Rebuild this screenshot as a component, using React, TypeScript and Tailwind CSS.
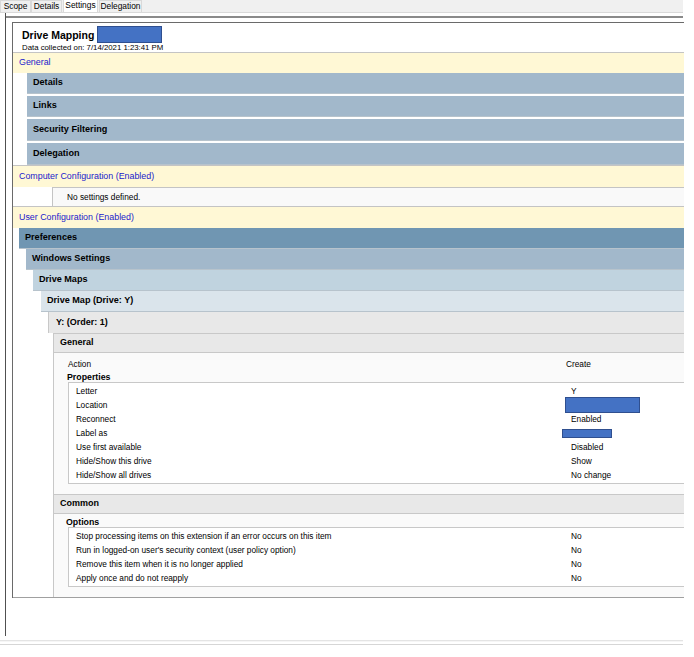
import React from 'react';

const font = { fontFamily: '"Liberation Sans", Arial, sans-serif' };

const tabs = [
  { label: 'Scope', w: 'w-[31px]' },
  { label: 'Details', w: 'w-[31px]' },
  { label: 'Settings', w: 'w-[35px]', active: true },
  { label: 'Delegation', w: 'w-[43px]' },
];

const properties: { name: string; value?: string; redact?: 'wide' | 'narrow' }[] = [
  { name: 'Letter', value: 'Y' },
  { name: 'Location', redact: 'wide' },
  { name: 'Reconnect', value: 'Enabled' },
  { name: 'Label as', redact: 'narrow' },
  { name: 'Use first available', value: 'Disabled' },
  { name: 'Hide/Show this drive', value: 'Show' },
  { name: 'Hide/Show all drives', value: 'No change' },
];

const options = [
  'Stop processing items on this extension if an error occurs on this item',
  "Run in logged-on user's security context (user policy option)",
  'Remove this item when it is no longer applied',
  'Apply once and do not reapply',
];

function YellowHeader({ label, h }: { label: string; h: string }) {
  return (
    <div className={`flex ${h} items-center border-t border-[#c4c4c4] bg-[#fff8d5] pl-[6px] text-[8.9px] text-[#1a1acc]`}>
      {label}
    </div>
  );
}

function Bar({ label, indent, color, h = 'h-[21px]' }: { label: string; indent: string; color: string; h?: string }) {
  return (
    <div className={`${indent}`}>
      <div className={`flex ${h} items-center border-b border-[#b7c3cc] ${color} pl-[6px] text-[9.1px] font-bold text-black`}>
        {label}
      </div>
    </div>
  );
}

function GrayHeader({ label }: { label: string }) {
  return (
    <div className="flex h-[20px] items-center border-y border-[#c8c8c8] bg-[#e8e8e8] pl-[6px] text-[9px] font-bold text-black">
      {label}
    </div>
  );
}

export default function App() {
  return (
    <div className="relative h-[657px] w-[694px] overflow-hidden bg-white text-black" style={font}>
      {/* Tabs */}
      <div className="flex h-[13px] w-[683px] items-end border-b border-[#d9d9d9] bg-[#f0f0f0]">
        {tabs.map((t) => (
          <div
            key={t.label}
            className={`flex ${t.w} items-center justify-center whitespace-nowrap border border-b-0 text-[8.4px] ${
              t.active ? 'mx-[1px] h-[13px] border-[#d9d9d9] bg-white pb-[2px]' : 'h-[12px] border-[#d9d9d9] bg-[#f0f0f0]'
            }`}
          >
            {t.label}
          </div>
        ))}
      </div>

      {/* Outer frame */}
      <div className="ml-[5px] h-[623px] w-[678px] border-l border-[#505050] pt-[3px]">
        <div className="h-[2px] border-t-2 border-[#8a8a8a]" />
        <div className="ml-[6px] mt-[4px] w-[672px] border-l border-t border-[#6a6a6a]">
          {/* Title */}
          <div className="h-[29px] pl-[9px] pt-[3px]">
            <div className="flex items-center gap-[3px] text-[10.5px] font-bold leading-[14px]">
              Drive Mapping
              <span className="inline-block h-[17px] w-[65px] border border-[#2f4f8f] bg-[#4472c4]" />
            </div>
            <div className="text-[7.8px] leading-[10px]">Data collected on: 7/14/2021 1:23:41 PM</div>
          </div>

          <YellowHeader label="General" h="h-[21px]" />
          <div className="ml-[14px] flex flex-col gap-[2px]">
            <Bar label="Details" indent="" color="bg-[#a2b8cb]" h="h-[21px]" />
            <Bar label="Links" indent="" color="bg-[#a2b8cb]" h="h-[21px]" />
            <Bar label="Security Filtering" indent="" color="bg-[#a2b8cb]" h="h-[22px]" />
            <Bar label="Delegation" indent="" color="bg-[#a2b8cb]" h="h-[22px]" />
          </div>

          <YellowHeader label="Computer Configuration (Enabled)" h="h-[22px]" />
          <div className="ml-[39px] flex h-[19px] items-center border-l border-t border-[#c4c4c4] bg-[#f9f9f9] pl-[14px] text-[8.3px]">
            No settings defined.
          </div>

          <YellowHeader label="User Configuration (Enabled)" h="h-[22px]" />
          <Bar label="Preferences" indent="ml-[6px]" color="bg-[#7096b2]" />
          <Bar label="Windows Settings" indent="ml-[13px]" color="bg-[#a2b8cb]" />
          <Bar label="Drive Maps" indent="ml-[20px]" color="bg-[#c0d3df]" />
          <Bar label="Drive Map (Drive: Y)" indent="ml-[28px]" color="bg-[#dae4eb]" />

          <div className="ml-[35px]">
            <div className="flex h-[21px] items-center border-l border-[#c8c8c8] bg-[#e8e8e8] pl-[7px] text-[9px] font-bold">
              Y: (Order: 1)
            </div>
            <div className="ml-[5px] border-l border-[#c8c8c8] bg-[#fafafa]">
              <GrayHeader label="General" />
              <div className="pb-[10px] pt-[6px]">
                <div className="flex h-[10px] items-center text-[8.3px]">
                  <span className="w-[512px] pl-[14px]">Action</span>
                  <span>Create</span>
                </div>
                <div className="mt-[3px] pl-[13px] text-[8.8px] font-bold leading-[10px]">Properties</div>
                <div className="ml-[14px] border border-r-0 border-[#c8c8c8] bg-white py-[1px]">
                  {properties.map((p) => (
                    <div key={p.name} className="flex h-[14px] items-center text-[8.3px]">
                      <span className="w-[499px] pl-[7px]">{p.name}</span>
                      {p.redact === 'wide' && <span className="-ml-[3px] inline-block h-[16px] w-[75px] border border-[#2f4f8f] bg-[#4472c4]" />}
                      {p.redact === 'narrow' && <span className="-ml-[6px] inline-block h-[9px] w-[50px] border border-[#2f4f8f] bg-[#4472c4]" />}
                      {p.value && <span className="pl-[3px]">{p.value}</span>}
                    </div>
                  ))}
                </div>
              </div>
              <GrayHeader label="Common" />
              <div className="pb-[10px] pt-[3px]">
                <div className="pl-[12px] text-[8.8px] font-bold leading-[10px]">Options</div>
                <div className="ml-[14px] border border-r-0 border-[#c8c8c8] bg-white py-[1px]">
                  {options.map((o) => (
                    <div key={o} className="flex h-[14px] items-center text-[8.3px]">
                      <span className="w-[499px] pl-[7px]">{o}</span>
                      <span className="pl-[3px]">No</span>
                    </div>
                  ))}
                </div>
              </div>
            </div>
          </div>
          <div className="border-t border-[#a0a0a0]" />
        </div>
      </div>

      {/* Bottom scroll area lines */}
      <div className="mt-[4px] h-[2px] w-[683px] border-t border-[#e4e4e4] bg-[#f6f6f6]" />
      <div className="mt-[2px] h-[2px] w-[683px] border-t border-[#d6d6d6]" />
    </div>
  );
}
